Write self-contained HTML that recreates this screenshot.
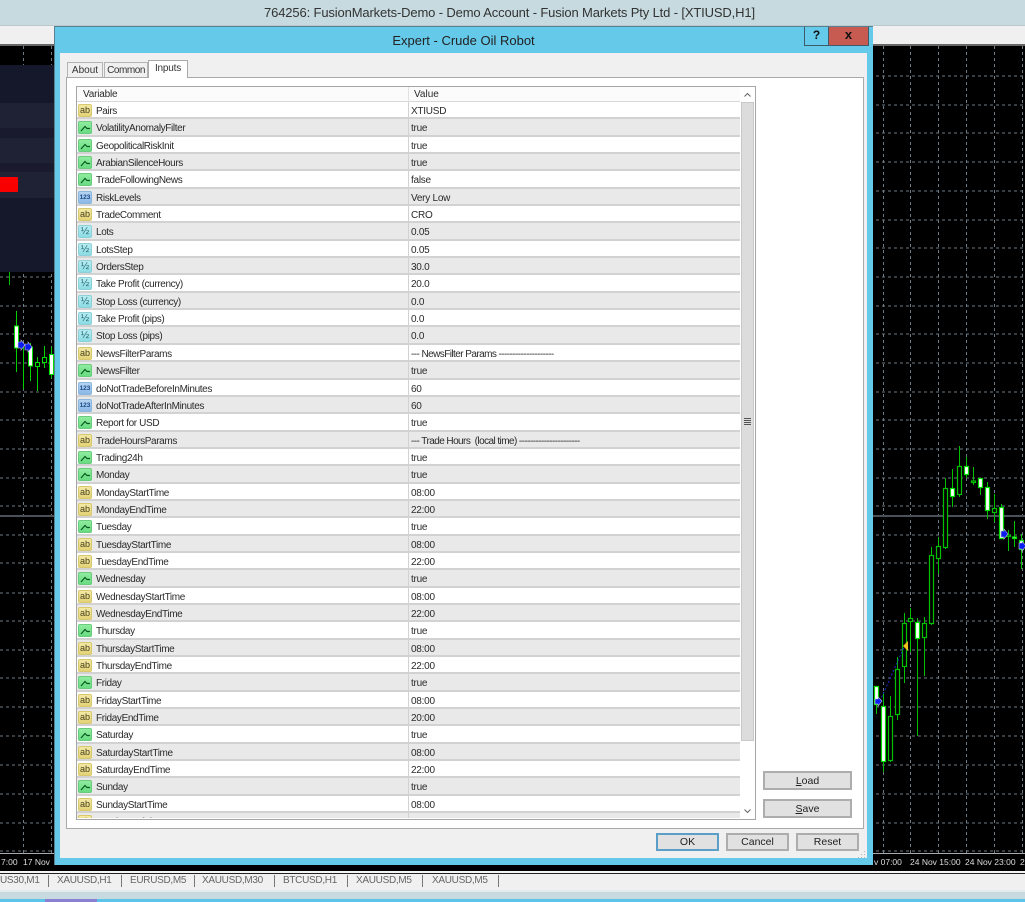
<!DOCTYPE html>
<html><head><meta charset="utf-8"><title>Expert - Crude Oil Robot</title>
<style>
*{box-sizing:border-box}
html,body{margin:0;padding:0;width:1025px;height:902px;overflow:hidden;background:#000}
body{font-family:"Liberation Sans",sans-serif;font-size:10px;color:#2a2a2a;position:relative;filter:blur(.3px)}
.a{position:absolute}
#list{left:77px;top:102px;width:663px;height:716px;overflow:hidden;background:#fff}
.r{height:17.35px;border-bottom:2px solid #d2d2d2;background:#fff;position:relative;white-space:pre;line-height:15px}
.r:nth-child(even){background:#e9e9e9}
.r b{font-weight:normal;position:absolute;left:19px;top:2px;letter-spacing:-.37px}
.r u{text-decoration:none;position:absolute;left:334px;top:2px;letter-spacing:-.25px}
.r u.l{letter-spacing:-.57px}
.r::after{content:"";position:absolute;left:331px;top:-1px;bottom:-2px;width:1px;background:#d2d2d2}
.i{position:absolute;left:1px;top:2px;width:14px;height:13px;border-radius:2px;font-size:9px;line-height:11px;text-align:center;color:#4a4420;font-style:normal;overflow:hidden}
.s{background:linear-gradient(#f3e9a4,#e3d277);border:1px solid #d8c86e}
.g{background:linear-gradient(#8fec9e,#68dc82);border:1px solid #6acb7e}
.n{background:linear-gradient(#b4d4f2,#8ab8e6);border:1px solid #8cb6dc;font-weight:bold;font-size:6.500px;color:#1d4a86}
.h{background:linear-gradient(#b6ecf0,#8cdce4);border:1px solid #8ed0d8;color:#2a6a78;font-size:10px}
.g svg{position:absolute;left:0;top:0}
.btn{position:absolute;background:#e1e1e1;border:2px solid #adadad;text-align:center;color:#222;font-size:10.5px;line-height:16px}
.tb{position:absolute;top:874px;color:#666;font-size:10px;line-height:14px;letter-spacing:-.3px}
.sp{position:absolute;top:875px;width:1px;height:12px;background:#777}
.dt{position:absolute;top:856px;color:#ddd;font-size:8.500px;line-height:12px;white-space:pre}
.tab{position:absolute;background:#f0f0f0;border:1px solid #b4b4b4;border-bottom:none;text-align:center;font-size:10px;color:#333}
</style></head><body>

<svg class="a" style="left:0;top:0" width="1025" height="902" viewBox="0 0 1025 902">
<rect width="1025" height="902" fill="#000"/>
<rect x="0" y="26" width="1025" height="18" fill="#f0f0f0"/>
<rect x="0" y="44" width="1025" height="2" fill="#666"/>
<g stroke="#6d7b87" stroke-width="1" stroke-dasharray="3 3" fill="none">
<path d="M0 76H1025M0 105H1025M0 133H1025M0 162H1025M0 191H1025M0 220H1025M0 248H1025M0 277H1025M0 306H1025M0 334H1025M0 363H1025M0 392H1025M0 420H1025M0 449H1025M0 478H1025M0 506H1025M0 535H1025M0 563H1025M0 593H1025M0 621H1025M0 650H1025M0 678H1025M0 707H1025M0 736H1025M0 765H1025M0 794H1025M0 823H1025M0 851H1025"/>
<path d="M23.500 46V853M51.500 46V853M883.500 46V853M910.500 46V853M938.500 46V853M966.500 46V853M994.500 46V853M1022.500 46V853"/>
</g>
<rect x="0" y="515" width="1025" height="2" fill="#4a5058"/>
<rect x="0" y="65" width="54" height="207" fill="#15172a"/>
<rect x="0" y="103" width="54" height="25" fill="#1f2234"/>
<rect x="0" y="128" width="54" height="10" fill="#191a2e"/>
<rect x="0" y="138" width="54" height="25" fill="#1f2234"/>
<rect x="0" y="163" width="54" height="9" fill="#191a2e"/>
<rect x="0" y="172" width="54" height="26" fill="#1f2234"/>
<rect x="-3" y="177" width="21" height="15" rx="1" fill="#f80000"/>
<path d="M9.500 272V285" stroke="#00c000"/>
<!-- left candles -->
<g stroke="#00d000" stroke-width="1" fill="none">
<path d="M16.500 311V372M23.500 347V389M30.500 343V381M37.500 357V391M44.500 346V368M51.500 347V378"/>
</g>
<g stroke="#00e000" stroke-width="1">
<rect x="14.500" y="326" width="4" height="22" fill="#fff"/>
<rect x="28.500" y="347" width="4" height="19" fill="#fff"/>
<rect x="35.500" y="362.500" width="4" height="4" fill="#000"/>
<rect x="42.500" y="357.500" width="4" height="5" fill="#000"/>
<rect x="49.500" y="354.500" width="4" height="20" fill="#fff"/>
</g>
<path d="M18 342l3 0 0-2 4 5-4 5 0-2-3 0zM25 344l3 0 0-2 4 5-4 5 0-2-3 0z" fill="#0a1cf0" stroke="#c8c8e0" stroke-width=".6"/>
<!-- right candles -->
<g stroke="#00c000" stroke-width="1" fill="none">
<path d="M876.500 686V714M883.500 692V772M890.500 696V762M897.500 657V720M904.500 613V683M910.500 608V652M917.500 618V736M924.500 617V676M931.500 547V625M938.500 537V574M945.500 478V549M952.500 469V507M959.500 446V497M966.500 457V478M973.500 467V485M980.500 478V495M987.500 482V519M994.500 494V522M1001.500 504V539M1008.500 530V551M1014.500 521V547M1021.500 534V569"/>
</g>
<g stroke="#00c000" stroke-width="1.200">
<rect x="874.500" y="686.500" width="4" height="18" fill="#fff" stroke="#00e000"/>
<rect x="881.500" y="706.500" width="4" height="55" fill="#fff" stroke="#00e000"/>
<rect x="888.500" y="716.500" width="4" height="44" fill="#000"/>
<rect x="895.500" y="669.500" width="4" height="45" fill="#000"/>
<rect x="902.500" y="623.500" width="4" height="43" fill="#000"/>
<rect x="908.500" y="618.500" width="4" height="3" fill="#000"/>
<rect x="915.500" y="622.500" width="4" height="16" fill="#fff" stroke="#00e000"/>
<rect x="922.500" y="623.500" width="4" height="14" fill="#000"/>
<rect x="929.500" y="555.500" width="4" height="68" fill="#000"/>
<rect x="936.500" y="546.500" width="4" height="12" fill="#000"/>
<rect x="943.500" y="488.500" width="4" height="59" fill="#000"/>
<rect x="950.500" y="488.500" width="4" height="8" fill="#fff" stroke="#00e000"/>
<rect x="957.500" y="466.500" width="4" height="28" fill="#000"/>
<rect x="964.500" y="466.500" width="4" height="8" fill="#fff" stroke="#00e000"/>
<rect x="971.500" y="481" width="4" height="1.500" fill="#000"/>
<rect x="978.500" y="478.500" width="4" height="9" fill="#fff" stroke="#00e000"/>
<rect x="985.500" y="487.500" width="4" height="23" fill="#fff" stroke="#00e000"/>
<rect x="992.500" y="508.500" width="4" height="4" fill="#000"/>
<rect x="999.500" y="507.500" width="4" height="31" fill="#fff" stroke="#00e000"/>
<rect x="1006.500" y="535" width="4" height="1.500" fill="#000"/>
<rect x="1012.500" y="537" width="4" height="1.500" fill="#fff" stroke="#00e000"/>
<rect x="1019.500" y="540.500" width="4" height="9" fill="#fff" stroke="#00e000"/>
</g>
<path d="M880 701L905 645" stroke="#1428d0" stroke-width="1" stroke-dasharray="2 2"/>
<path d="M875 699l3 0 0-2 4 4-4 5 0-2-3 0zM1001 531l3 0 0-2 4 5-4 5 0-2-3 0zM1019 543l3 0 0-2 4 5-4 5 0-2-3 0z" fill="#0a1cf0" stroke="#c8c8e0" stroke-width=".6"/>
<path d="M908 641v10l-5-5z" fill="#f0c020"/>
<rect x="0" y="853" width="1025" height="1" fill="#aaa"/>
<rect x="0" y="854" width="1025" height="17" fill="#000"/>
<rect x="0" y="871" width="1025" height="2" fill="#f4f4f4"/>
<rect x="0" y="873" width="1025" height="1" fill="#222"/>
<rect x="0" y="874" width="1025" height="16" fill="#f0f0f0"/>
<rect x="0" y="890" width="1025" height="2" fill="#e4ebed"/>
<rect x="0" y="892" width="1025" height="7" fill="#c6dadf"/>
<rect x="0" y="899" width="1025" height="3" fill="#5cc4e6"/>
<rect x="45" y="899" width="52" height="3" fill="#8a7fd0"/>
</svg>

<div class="dt" style="left:1px">7:00</div>
<div class="dt" style="left:23px">17 Nov</div>
<div class="dt" style="left:874px">v 07:00</div>
<div class="dt" style="left:910px">24 Nov 15:00</div>
<div class="dt" style="left:965px">24 Nov 23:00</div>
<div class="dt" style="left:1020px">2</div>

<div class="tb" style="left:0">US30,M1</div><div class="sp" style="left:48px"></div>
<div class="tb" style="left:57px">XAUUSD,H1</div><div class="sp" style="left:121px"></div>
<div class="tb" style="left:130px">EURUSD,M5</div><div class="sp" style="left:194px"></div>
<div class="tb" style="left:202px">XAUUSD,M30</div><div class="sp" style="left:274px"></div>
<div class="tb" style="left:283px">BTCUSD,H1</div><div class="sp" style="left:347px"></div>
<div class="tb" style="left:356px">XAUUSD,M5</div><div class="sp" style="left:422px"></div>
<div class="tb" style="left:432px">XAUUSD,M5</div><div class="sp" style="left:498px"></div>

<!-- main title bar -->
<div class="a" style="left:0;top:0;width:1025px;height:26px;background:#c6dadf;border-bottom:1px solid #b9c9ce"></div>
<div class="a" style="left:-3px;top:0;width:1025px;height:26px;text-align:center;font-size:13px;line-height:26px;color:#333;letter-spacing:-.14px">764256: FusionMarkets-Demo - Demo Account - Fusion Markets Pty Ltd - [XTIUSD,H1]</div>

<!-- dialog -->
<div class="a" style="left:54px;top:26px;width:819px;height:839px;background:#65c9ea;border:1px solid #5a7f90;border-width:1px 0 0 1px"></div>
<div class="a" style="left:54px;top:33px;width:819px;text-align:center;font-size:13px;line-height:15px;color:#222">Expert - Crude Oil Robot</div>
<div class="a" style="left:804px;top:27px;width:25px;height:19px;border:1px solid #3c5a68;border-top:none;text-align:center;font-weight:bold;font-size:12px;line-height:17px;color:#111">?</div>
<div class="a" style="left:828px;top:27px;width:41px;height:19px;background:#c75b52;border:1px solid #3c5a68;border-top:none;text-align:center;font-weight:bold;font-size:13px;line-height:16px;color:#111">x</div>
<div class="a" style="left:60px;top:53px;width:807px;height:805px;background:#f0f0f0"></div>

<!-- tab panel -->
<div class="a" style="left:66px;top:77px;width:798px;height:752px;background:#fff;border:1px solid #a9a9a9"></div>
<div class="tab" style="left:67px;top:62px;width:36px;height:15px;line-height:16px">About</div>
<div class="tab" style="left:104px;top:62px;width:44px;height:15px;line-height:16px;letter-spacing:-.45px">Common</div>
<div class="tab" style="left:148px;top:60px;width:40px;height:18px;line-height:16px;background:#fff;border-color:#a9a9a9;letter-spacing:-.2px">Inputs</div>

<!-- list -->
<div class="a" style="left:76px;top:86px;width:680px;height:734px;background:#fff;border:1px solid #a6a6a6"></div>
<div class="a" style="left:77px;top:87px;width:663px;height:15px;background:#fbfbfb;border-bottom:1px solid #d8d8d8;line-height:16px"><span class="a" style="left:6px;letter-spacing:-.2px">Variable</span><span class="a" style="left:337px">Value</span><span class="a" style="left:331px;top:0;width:1px;height:15px;background:#e2e2e2"></span></div>

<div id="list" class="a">
<div class="r"><i class="i s">ab</i><b>Pairs</b><u>XTIUSD</u></div>
<div class="r"><i class="i g"><svg width="12" height="11"><path d="M2 9L6 4.500L8 6.500H11" fill="none" stroke="#0a5a20" stroke-width="1.200"/></svg></i><b>VolatilityAnomalyFilter</b><u>true</u></div>
<div class="r"><i class="i g"><svg width="12" height="11"><path d="M2 9L6 4.500L8 6.500H11" fill="none" stroke="#0a5a20" stroke-width="1.200"/></svg></i><b>GeopoliticalRiskInit</b><u>true</u></div>
<div class="r"><i class="i g"><svg width="12" height="11"><path d="M2 9L6 4.500L8 6.500H11" fill="none" stroke="#0a5a20" stroke-width="1.200"/></svg></i><b>ArabianSilenceHours</b><u>true</u></div>
<div class="r"><i class="i g"><svg width="12" height="11"><path d="M2 9L6 4.500L8 6.500H11" fill="none" stroke="#0a5a20" stroke-width="1.200"/></svg></i><b>TradeFollowingNews</b><u>false</u></div>
<div class="r"><i class="i n">123</i><b>RiskLevels</b><u>Very Low</u></div>
<div class="r"><i class="i s">ab</i><b>TradeComment</b><u>CRO</u></div>
<div class="r"><i class="i h">½</i><b>Lots</b><u>0.05</u></div>
<div class="r"><i class="i h">½</i><b>LotsStep</b><u>0.05</u></div>
<div class="r"><i class="i h">½</i><b>OrdersStep</b><u>30.0</u></div>
<div class="r"><i class="i h">½</i><b>Take Profit (currency)</b><u>20.0</u></div>
<div class="r"><i class="i h">½</i><b>Stop Loss (currency)</b><u>0.0</u></div>
<div class="r"><i class="i h">½</i><b>Take Profit (pips)</b><u>0.0</u></div>
<div class="r"><i class="i h">½</i><b>Stop Loss (pips)</b><u>0.0</u></div>
<div class="r"><i class="i s">ab</i><b>NewsFilterParams</b><u class="l">--- NewsFilter Params --------------------</u></div>
<div class="r"><i class="i g"><svg width="12" height="11"><path d="M2 9L6 4.500L8 6.500H11" fill="none" stroke="#0a5a20" stroke-width="1.200"/></svg></i><b>NewsFilter</b><u>true</u></div>
<div class="r"><i class="i n">123</i><b>doNotTradeBeforeInMinutes</b><u>60</u></div>
<div class="r"><i class="i n">123</i><b>doNotTradeAfterInMinutes</b><u>60</u></div>
<div class="r"><i class="i g"><svg width="12" height="11"><path d="M2 9L6 4.500L8 6.500H11" fill="none" stroke="#0a5a20" stroke-width="1.200"/></svg></i><b>Report for USD</b><u>true</u></div>
<div class="r"><i class="i s">ab</i><b>TradeHoursParams</b><u class="l">--- Trade Hours  (local time) ----------------------</u></div>
<div class="r"><i class="i g"><svg width="12" height="11"><path d="M2 9L6 4.500L8 6.500H11" fill="none" stroke="#0a5a20" stroke-width="1.200"/></svg></i><b>Trading24h</b><u>true</u></div>
<div class="r"><i class="i g"><svg width="12" height="11"><path d="M2 9L6 4.500L8 6.500H11" fill="none" stroke="#0a5a20" stroke-width="1.200"/></svg></i><b>Monday</b><u>true</u></div>
<div class="r"><i class="i s">ab</i><b>MondayStartTime</b><u>08:00</u></div>
<div class="r"><i class="i s">ab</i><b>MondayEndTime</b><u>22:00</u></div>
<div class="r"><i class="i g"><svg width="12" height="11"><path d="M2 9L6 4.500L8 6.500H11" fill="none" stroke="#0a5a20" stroke-width="1.200"/></svg></i><b>Tuesday</b><u>true</u></div>
<div class="r"><i class="i s">ab</i><b>TuesdayStartTime</b><u>08:00</u></div>
<div class="r"><i class="i s">ab</i><b>TuesdayEndTime</b><u>22:00</u></div>
<div class="r"><i class="i g"><svg width="12" height="11"><path d="M2 9L6 4.500L8 6.500H11" fill="none" stroke="#0a5a20" stroke-width="1.200"/></svg></i><b>Wednesday</b><u>true</u></div>
<div class="r"><i class="i s">ab</i><b>WednesdayStartTime</b><u>08:00</u></div>
<div class="r"><i class="i s">ab</i><b>WednesdayEndTime</b><u>22:00</u></div>
<div class="r"><i class="i g"><svg width="12" height="11"><path d="M2 9L6 4.500L8 6.500H11" fill="none" stroke="#0a5a20" stroke-width="1.200"/></svg></i><b>Thursday</b><u>true</u></div>
<div class="r"><i class="i s">ab</i><b>ThursdayStartTime</b><u>08:00</u></div>
<div class="r"><i class="i s">ab</i><b>ThursdayEndTime</b><u>22:00</u></div>
<div class="r"><i class="i g"><svg width="12" height="11"><path d="M2 9L6 4.500L8 6.500H11" fill="none" stroke="#0a5a20" stroke-width="1.200"/></svg></i><b>Friday</b><u>true</u></div>
<div class="r"><i class="i s">ab</i><b>FridayStartTime</b><u>08:00</u></div>
<div class="r"><i class="i s">ab</i><b>FridayEndTime</b><u>20:00</u></div>
<div class="r"><i class="i g"><svg width="12" height="11"><path d="M2 9L6 4.500L8 6.500H11" fill="none" stroke="#0a5a20" stroke-width="1.200"/></svg></i><b>Saturday</b><u>true</u></div>
<div class="r"><i class="i s">ab</i><b>SaturdayStartTime</b><u>08:00</u></div>
<div class="r"><i class="i s">ab</i><b>SaturdayEndTime</b><u>22:00</u></div>
<div class="r"><i class="i g"><svg width="12" height="11"><path d="M2 9L6 4.500L8 6.500H11" fill="none" stroke="#0a5a20" stroke-width="1.200"/></svg></i><b>Sunday</b><u>true</u></div>
<div class="r"><i class="i s">ab</i><b>SundayStartTime</b><u>08:00</u></div>
<div class="r"><i class="i s">ab</i><b>SundayEndTime</b><u>22:00</u></div>
</div>

<!-- scrollbar -->
<div class="a" style="left:740px;top:87px;width:15px;height:732px;background:#fff"></div>
<div class="a" style="left:741px;top:102px;width:13px;height:639px;background:#dcdcdc;border:1px solid #c8c8c8"></div>
<svg class="a" style="left:740px;top:87px" width="15" height="15"><path d="M4.500 9.500L7.500 6.500L10.500 9.500" fill="none" stroke="#666"/></svg>
<svg class="a" style="left:740px;top:803px" width="15" height="15"><path d="M4.500 6.500L7.500 9.500L10.500 6.500" fill="none" stroke="#666"/></svg>
<div class="a" style="left:744px;top:418px;width:7px;height:1px;background:#555;box-shadow:0 2px 0 #555,0 4px 0 #555,0 6px 0 #555"></div>

<div class="btn" style="left:763px;top:771px;width:89px;height:19px"><span style="text-decoration:underline">L</span>oad</div>
<div class="btn" style="left:763px;top:799px;width:89px;height:19px"><span style="text-decoration:underline">S</span>ave</div>
<div class="btn" style="left:656px;top:833px;width:63px;height:18px;border-color:#5b9fc8;line-height:15px">OK</div>
<div class="btn" style="left:726px;top:833px;width:63px;height:18px;line-height:15px">Cancel</div>
<div class="btn" style="left:796px;top:833px;width:63px;height:18px;line-height:15px">Reset</div>
<svg class="a" style="left:858px;top:850px" width="8" height="8"><path d="M6 1h1v1h-1zM3 4h1v1h-1zM6 4h1v1h-1zM0 7h1v1h-1zM3 7h1v1h-1zM6 7h1v1h-1z" fill="#b8b8b8"/></svg>

</body></html>
